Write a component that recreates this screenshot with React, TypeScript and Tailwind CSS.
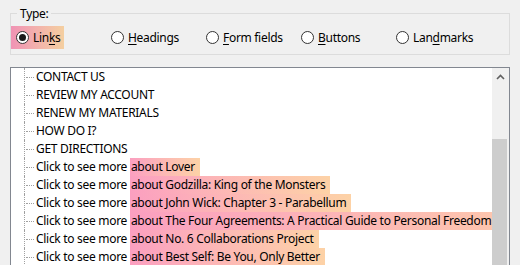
import React from 'react';

const font = { fontFamily: '"Noto Sans", "Open Sans", sans-serif' };

type Kind = { label: string; key: number };

const kinds: Kind[] = [
  { label: 'Links', key: 3 },
  { label: 'Headings', key: 0 },
  { label: 'Form fields', key: 0 },
  { label: 'Buttons', key: 0 },
  { label: 'Landmarks', key: 3 },
];

const items: { text: string; hit?: string }[] = [
  { text: 'CONTACT US' },
  { text: 'REVIEW MY ACCOUNT' },
  { text: 'RENEW MY MATERIALS' },
  { text: 'HOW DO I?' },
  { text: 'GET DIRECTIONS' },
  { text: 'Click to see more ', hit: 'about Lover' },
  { text: 'Click to see more ', hit: 'about Godzilla: King of the Monsters' },
  { text: 'Click to see more ', hit: 'about John Wick: Chapter 3 - Parabellum' },
  { text: 'Click to see more ', hit: 'about The Four Agreements: A Practical Guide to Personal Freedom (A Toltec Wisdom Book)' },
  { text: 'Click to see more ', hit: 'about No. 6 Collaborations Project' },
  { text: 'Click to see more ', hit: 'about Best Self: Be You, Only Better' },
];

const Label = ({ k }: { k: Kind }) => (
  <span>
    {k.label.slice(0, k.key)}
    <span className="underline underline-offset-2">{k.label[k.key]}</span>
    {k.label.slice(k.key + 1)}
  </span>
);

const Radio = ({ on }: { on?: boolean }) => (
  <span className="flex h-[13px] w-[13px] shrink-0 items-center justify-center rounded-full border border-[#333333] bg-white">
    {on && <span className="h-[7px] w-[7px] rounded-full bg-[#1a1a1a]" />}
  </span>
);

const App: React.FC = () => {
  return (
    <div
      className="h-[265px] w-[520px] overflow-hidden bg-[#f0f0f0] px-[10px] text-[12px] tracking-[-0.3px] text-black"
      style={font}
    >
      <fieldset className="mt-[6px] h-[49px] border border-[#dcdcdc]">
        <legend className="ml-[6px] px-[3px] leading-[15px]">Type:</legend>
        <div className="mt-[5px] flex items-center pl-[5px]">
          {kinds.map((k, i) => (
            <div key={k.label} className="w-[95px]">
              {i === 0 ? (
                <div className="-ml-[5px] flex h-[23px] w-[53px] items-center gap-[4px] bg-gradient-to-r from-[#f093b4] to-[#f4cfa0] pl-[5px]">
                  <Radio on />
                  <Label k={k} />
                </div>
              ) : (
                <div className="flex h-[23px] items-center gap-[4px]">
                  <Radio />
                  <Label k={k} />
                </div>
              )}
            </div>
          ))}
        </div>
      </fieldset>

      <div className="mt-[12px] flex h-[220px] border border-[#828790] bg-white">
        <div className="min-w-0 flex-1 overflow-hidden">
          {items.map((it, i) => (
            <div key={i} className="flex h-[18px] items-center whitespace-pre">
              <div className="ml-[13px] flex h-full w-[11px] shrink-0 items-center border-l border-dotted border-[#a0a0a0]">
                <div className="ml-[1px] w-[8px] border-t border-dotted border-[#a0a0a0]" />
              </div>
              <span className="ml-[1px]">{it.text}</span>
              {it.hit && (
                <span className="flex h-full items-center bg-gradient-to-r from-[#fb9fc0] to-[#fdd2a6] pl-[1px] pr-[5px]">
                  {it.hit}
                </span>
              )}
            </div>
          ))}
        </div>
        <div className="flex w-[17px] shrink-0 flex-col bg-[#f0f0f0]">
          <div className="flex h-[17px] items-center justify-center">
            <svg width="9" height="6" viewBox="0 0 9 6">
              <path d="M1 5 L4.5 1.5 L8 5" fill="none" stroke="#606060" strokeWidth="1.6" />
            </svg>
          </div>
          <div className="h-[54px]" />
          <div className="mr-[2px] flex-1 bg-[#cdcdcd]" />
        </div>
      </div>
    </div>
  );
};

export default App;
